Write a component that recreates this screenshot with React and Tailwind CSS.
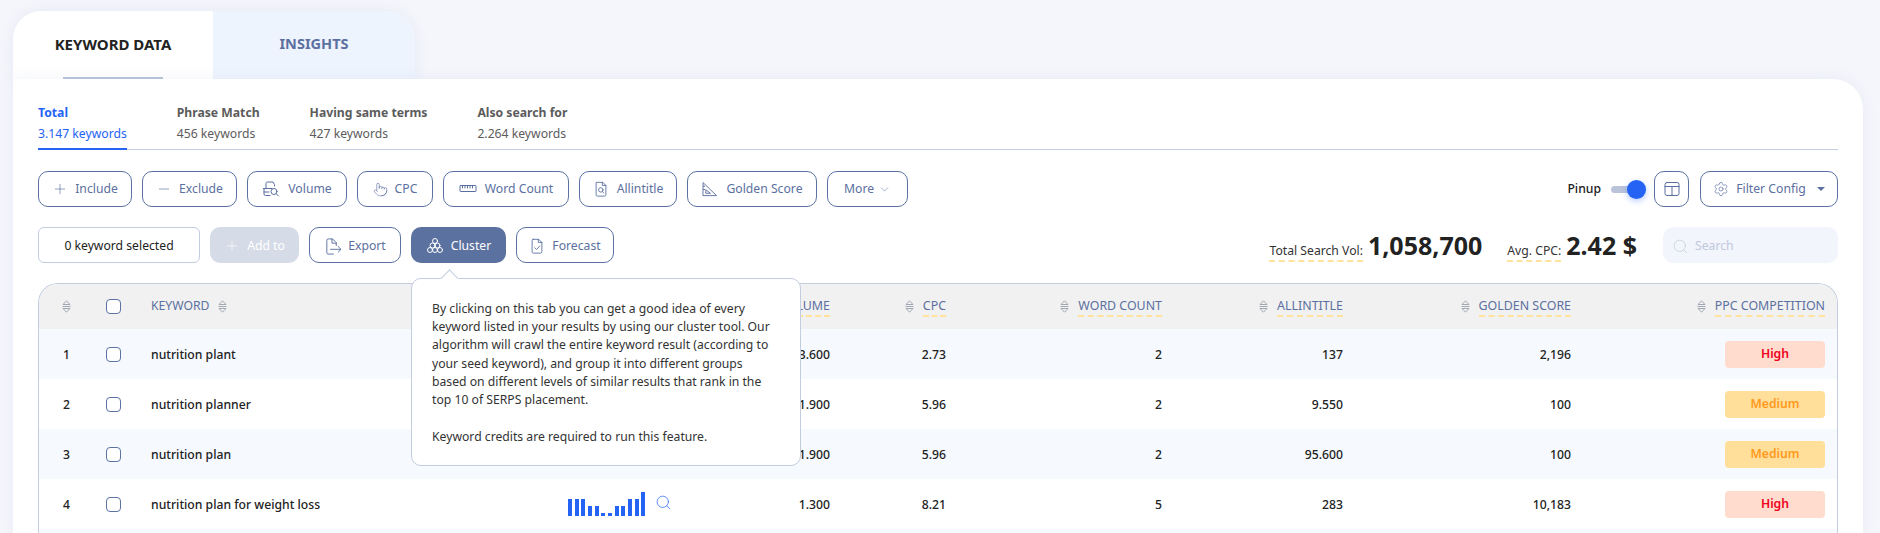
import { Plus, Minus, ChevronDown, Settings, Search, Pointer } from 'lucide-react';

const Svg = ({ children, size = 18 }) => (
    <svg width={size} height={size} viewBox="0 0 18 18" fill="none" stroke="currentColor" strokeWidth="1" strokeLinecap="round" strokeLinejoin="round" className="shrink-0">
        {children}
    </svg>
);

const VolumeIcon = () => (
    <Svg>
        <path d="M4 8V3.500A1.500 1.500 0 0 1 5.500 2H11l1.500 2.500V6" />
        <path d="M1.500 8.500H10M2 8.500V14a1.500 1.500 0 0 0 1.500 1.500H8" />
        <path d="M2 12h5" />
        <circle cx="12" cy="11.500" r="3" />
        <path d="M14.200 13.700 16.500 16" />
    </Svg>
);

const RulerIcon = () => (
    <Svg>
        <rect x="1" y="5.500" width="16" height="6" rx="0.500" />
        <path d="M3.500 5.500v2.500M6 5.500v2.500M8.500 5.500v2.500M11 5.500v2.500M13.500 5.500v2.500" />
    </Svg>
);

const FileSearchIcon = () => (
    <Svg size={16}>
        <path d="M4 1.500h7l3.500 3.500v10.500a1.500 1.500 0 0 1-1.500 1.500H5a1.500 1.500 0 0 1-1.500-1.500V2z" />
        <path d="M10.500 1.500V5h4" />
        <circle cx="8.800" cy="10" r="2.500" />
        <path d="M10.700 12 12 13.500" />
    </Svg>
);

const SetSquareIcon = () => (
    <Svg size={17}>
        <path d="M2.500 2 16.500 15.500H2.500z" />
        <path d="M5.500 9.500 10 13H5.500z" />
        <path d="M2.500 5.500h1.500M2.500 9h1.500" />
    </Svg>
);

const ExportIcon = () => (
    <Svg size={17}>
        <path d="M10 17H4.500A1.500 1.500 0 0 1 3 15.500v-13A1.500 1.500 0 0 1 4.500 1H9l4 4v3" />
        <path d="M8.500 1v4.500H13" />
        <path d="M7 12h11M15 9l3 3-3 3" />
    </Svg>
);

const ClusterIcon = () => (
    <Svg>
        <circle cx="9" cy="4" r="2.500" />
        <circle cx="6.500" cy="8.500" r="2.500" />
        <circle cx="11.500" cy="8.500" r="2.500" />
        <circle cx="4" cy="13" r="2.500" />
        <circle cx="9" cy="13" r="2.500" />
        <circle cx="14" cy="13" r="2.500" />
    </Svg>
);

const ForecastIcon = () => (
    <Svg size={16}>
        <path d="M4.500 1.500H11l3.500 3.500v10.500a1.500 1.500 0 0 1-1.500 1.500H5a1.500 1.500 0 0 1-1.500-1.500V3a1.500 1.500 0 0 1 1-1.500z" />
        <path d="M10.500 1.500V5h4" />
        <path d="M6.500 11l2 2 3.500-4" />
    </Svg>
);

const SortIcon = () => (
    <svg width="9" height="13" viewBox="0 0 9 13" fill="none" stroke="#9aa0ac" strokeWidth="0.9" strokeLinejoin="round" className="shrink-0">
        <path d="M1 4.500 4.500 0.800 8 4.500z" />
        <path d="M0.500 6.500h8" />
        <path d="M1 8.500 4.500 12.200 8 8.500z" />
    </svg>
);

const filterButtons = [
    { label: 'Include', icon: <Plus size={16} strokeWidth={1} />, cls: 'w-[94px] gap-[7px]' },
    { label: 'Exclude', icon: <Minus size={16} strokeWidth={1} />, cls: 'w-[95px] gap-[7px]' },
    { label: 'Volume', icon: <VolumeIcon />, cls: 'w-[100px] gap-[8px]' },
    { label: 'CPC', icon: <Pointer size={15} strokeWidth={1} />, cls: 'w-[76px] gap-[7px]' },
    { label: 'Word Count', icon: <RulerIcon />, cls: 'w-[126px] gap-[8px]' },
    { label: 'Allintitle', icon: <FileSearchIcon />, cls: 'w-[98px] gap-[8px]' },
    { label: 'Golden Score', icon: <SetSquareIcon />, cls: 'w-[130px] gap-[8px]' },
];

const subTabs = [
    { label: 'Phrase Match', count: '456 keywords' },
    { label: 'Having same terms', count: '427 keywords' },
    { label: 'Also search for', count: '2.264 keywords' },
];

const rows = [
    { id: 1, keyword: 'nutrition plant', volume: '3.600', cpc: '2.73', words: 2, allintitle: '137', golden: '2,196', ppc: 'High', bars: [17, 17, 17, 10, 10, 3, 3, 10, 10, 17, 17, 24] },
    { id: 2, keyword: 'nutrition planner', volume: '1.900', cpc: '5.96', words: 2, allintitle: '9.550', golden: '100', ppc: 'Medium', bars: [17, 17, 17, 10, 10, 3, 3, 10, 10, 17, 17, 24] },
    { id: 3, keyword: 'nutrition plan', volume: '1.900', cpc: '5.96', words: 2, allintitle: '95.600', golden: '100', ppc: 'Medium', bars: [0, 0, 10, 10, 0, 0, 0, 10, 10, 0, 10, 0] },
    { id: 4, keyword: 'nutrition plan for weight loss', volume: '1.300', cpc: '8.21', words: 5, allintitle: '283', golden: '10,183', ppc: 'High', bars: [17, 17, 17, 10, 10, 3, 3, 10, 10, 17, 17, 24] },
];

const gridCols = 'grid grid-cols-[55px_39px_435px_172px_90px_116px_216px_181px_228px_254px] pr-[12px] items-center';

const Checkbox = () => <div className="mx-auto w-[15px] h-[15px] rounded-[4px] border border-[#5b72a3] bg-white"></div>;

const Btn = ({ children, className = '' }) => (
    <button className={`h-[36px] flex items-center justify-center rounded-[10px] border border-[#5b72a3] bg-white text-[#5b70a0] text-[12.2px] ${className}`}>
        {children}
    </button>
);

const HeadCell = ({ label }) => (
    <div className="flex items-center justify-end gap-[9px] text-[12.4px]">
        <SortIcon />
        <span className="border-b-2 border-dashed border-[#ffe29c] leading-[18px]">{label}</span>
    </div>
);

const App = () => {
    return (
        <div className="h-[533px] overflow-hidden bg-[#f5f6fb] pt-[11px] pl-[13px] pr-[17px] font-['Noto_Sans',sans-serif] text-[12.2px] text-[#222]">
            <div className="flex w-[402px] h-[68px] rounded-t-[28px] shadow-[0_0_14px_rgba(120,140,200,0.12)]">
                <div className="relative w-[200px] rounded-tl-[28px] bg-white flex justify-center items-center pb-[2px] text-[15px] font-bold text-[#222]">
                    KEYWORD DATA
                    <div className="absolute bottom-0 left-[50px] w-[100px] h-[2px] bg-[#b9c4da]"></div>
                </div>
                <div className="flex-1 rounded-tr-[28px] bg-[#eef4fe] flex justify-center items-center pb-[2px] text-[14.5px] font-bold text-[#5b70a0]">
                    INSIGHTS
                </div>
            </div>

            <div className="relative h-[454px] rounded-tr-[30px] bg-white px-[25px] shadow-[0_0_14px_rgba(120,140,200,0.1)]">
                <div className="flex gap-[50px] h-[71px] pt-[24px] border-b border-[#c3cde0]">
                    <div className="h-[47px] border-b-2 border-[#2563f5] -mb-px text-[#2563f5]">
                        <div className="font-bold leading-[20px]">Total</div>
                        <div className="leading-[20px] pt-[1px]">3.147 keywords</div>
                    </div>
                    {subTabs.map((tab) => (
                        <div key={tab.label} className="text-[#5c5c5c]">
                            <div className="font-bold leading-[20px]">{tab.label}</div>
                            <div className="leading-[20px] pt-[1px]">{tab.count}</div>
                        </div>
                    ))}
                </div>

                <div className="flex justify-between items-center mt-[21px]">
                    <div className="flex gap-[10px]">
                        {filterButtons.map((b) => (
                            <Btn key={b.label} className={b.cls}>
                                {b.icon}
                                {b.label}
                            </Btn>
                        ))}
                        <Btn className="w-[81px] gap-[4px]">
                            More
                            <ChevronDown size={13} strokeWidth={1} />
                        </Btn>
                    </div>
                    <div className="flex items-center">
                        <span className="font-medium text-[#222] mr-[10px]">Pinup</span>
                        <div className="relative w-[35px] h-[7px] rounded-full bg-[#b9c4da] mr-[8px]">
                            <div className="absolute right-0 -top-[6px] w-[19px] h-[19px] rounded-full bg-[#2563f5] shadow-[0_2px_6px_rgba(37,99,245,0.35)]"></div>
                        </div>
                        <Btn className="w-[35px] mr-[11px]">
                            <Svg>
                                <rect x="2" y="2.500" width="14" height="13" rx="2" />
                                <path d="M2 6.500h14M9 6.500v9" />
                            </Svg>
                        </Btn>
                        <Btn className="w-[138px] gap-[7px]">
                            <Settings size={16} strokeWidth={1} />
                            Filter Config
                            <span className="ml-[4px] border-x-[4px] border-x-transparent border-t-[4px] border-t-[#5b70a0]"></span>
                        </Btn>
                    </div>
                </div>

                <div className="flex justify-between items-center mt-[20px]">
                    <div className="flex gap-[10px]">
                        <div className="w-[162px] h-[36px] pt-[2px] flex items-center justify-center rounded-[6px] border border-[#c3cde0] text-[#222]">0 keyword selected</div>
                        <button className="w-[89px] h-[36px] pt-[2px] flex items-center justify-center gap-[7px] rounded-[10px] bg-[#d5dbe7] text-white">
                            <Plus size={16} strokeWidth={1} />
                            Add to
                        </button>
                        <Btn className="w-[92px] pt-[2px] gap-[7px]">
                            <ExportIcon />
                            Export
                        </Btn>
                        <div className="relative">
                            <button className="w-[95px] h-[36px] pt-[2px] flex items-center justify-center gap-[7px] rounded-[10px] bg-[#5b71a0] text-white">
                                <ClusterIcon />
                                Cluster
                            </button>
                            <div className="absolute z-10 left-0 top-[51px] w-[390px] h-[188px] rounded-[10px] border border-[#c3cde0] bg-white pl-[20px] pt-[21px] text-[12.2px] leading-[18.2px] text-[#333]">
                                <div className="absolute -top-[7px] left-[31px] w-[13px] h-[13px] rotate-45 border-l border-t border-[#c3cde0] bg-white"></div>
                                <p className="relative">
                                    By clicking on this tab you can get a good idea of every<br />
                                    keyword listed in your results by using our cluster tool. Our<br />
                                    algorithm will crawl the entire keyword result (according to<br />
                                    your seed keyword), and group it into different groups<br />
                                    based on different levels of similar results that rank in the<br />
                                    top 10 of SERPS placement.
                                </p>
                                <p className="mt-[19px]">Keyword credits are required to run this feature.</p>
                            </div>
                        </div>
                        <Btn className="w-[98px] pt-[2px] gap-[7px]">
                            <ForecastIcon />
                            Forecast
                        </Btn>
                    </div>
                    <div className="flex items-center">
                        <span className="mt-[14px] border-b-2 border-dashed border-[#ffe29c] leading-[18px] text-[#333]">Total Search Vol:</span>
                        <span className="ml-[5px] text-[25px] leading-[30px] font-bold text-[#222]">1,058,700</span>
                        <span className="ml-[25px] mt-[14px] border-b-2 border-dashed border-[#ffe29c] leading-[18px] text-[#333]">Avg. CPC:</span>
                        <span className="ml-[5px] text-[25px] leading-[30px] font-bold text-[#222]">2.42 $</span>
                        <div className="ml-[26px] w-[175px] h-[36px] pt-[2px] flex items-center gap-[6px] pl-[9px] rounded-[10px] bg-[#f3f5fc] text-[#c0c9dc]">
                            <Search size={17} strokeWidth={1} />
                            Search
                        </div>
                    </div>
                </div>

                <div className="mt-[20px] rounded-t-[20px] border border-b-0 border-[#c3cde0] overflow-hidden">
                    <div className={`${gridCols} h-[45px] bg-[#f1f1f1] text-[#5b70a0]`}>
                        <div className="flex justify-center"><SortIcon /></div>
                        <Checkbox />
                        <div className="pl-[18px] flex items-center gap-[9px]">
                            KEYWORD
                            <SortIcon />
                        </div>
                        <div></div>
                        <HeadCell label="VOLUME" />
                        <HeadCell label="CPC" />
                        <HeadCell label="WORD COUNT" />
                        <HeadCell label="ALLINTITLE" />
                        <HeadCell label="GOLDEN SCORE" />
                        <HeadCell label="PPC COMPETITION" />
                    </div>
                    {rows.map((row) => (
                        <div key={row.id} className={`${gridCols} h-[50px] font-medium text-[#222] ${row.id % 2 === 1 ? 'bg-[#f6f9fd]' : 'bg-white'}`}>
                            <div className="text-center pt-[2px]">{row.id}</div>
                            <Checkbox />
                            <div className="pl-[18px] pt-[2px]">{row.keyword}</div>
                            <div className="flex items-center">
                                <div className="flex items-end gap-[2.67px] h-[24px]">
                                    {row.bars.map((h, i) => (
                                        <div key={i} className="w-[4px] bg-[#2563f5]" style={{ height: h }}></div>
                                    ))}
                                </div>
                                <Search size={17} strokeWidth={1} className="ml-[10px] -mt-[3px] text-[#2563f5]" />
                            </div>
                            <div className="text-right pt-[2px]">{row.volume}</div>
                            <div className="text-right pt-[2px]">{row.cpc}</div>
                            <div className="text-right pt-[2px]">{row.words}</div>
                            <div className="text-right pt-[2px]">{row.allintitle}</div>
                            <div className="text-right pt-[2px]">{row.golden}</div>
                            <div className="flex justify-end">
                                <div className={`w-[100px] h-[27px] flex items-center justify-center rounded-[4px] font-semibold ${row.ppc === 'High' ? 'bg-[#ffdccd] text-[#f0001c]' : 'bg-[#ffdf99] text-[#ff9a1e]'}`}>{row.ppc}</div>
                            </div>
                        </div>
                    ))}
                    <div className="h-[50px] bg-[#f6f9fd]"></div>
                </div>
            </div>
        </div>
    );
};

export default App;
